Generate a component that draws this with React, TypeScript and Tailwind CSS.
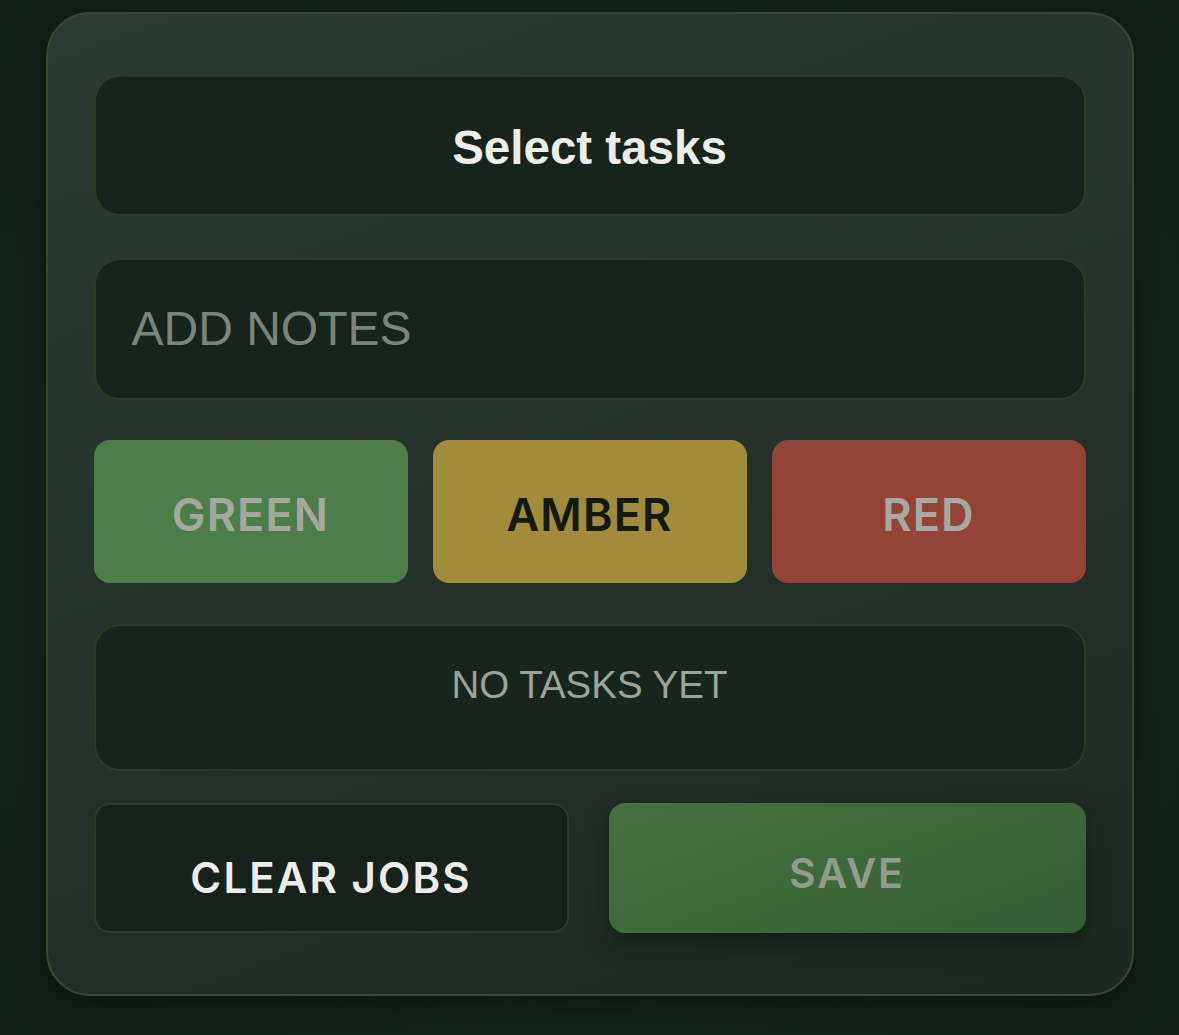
import React from "react";

const inter = "font-['Inter','Noto_Sans',sans-serif]";
const arial = "font-['Liberation_Sans',Arial,sans-serif]";

export default function App() {
  return (
    <div className="min-h-[1035px] w-full bg-[radial-gradient(ellipse_at_center,#1c2d21_0%,#16261b_60%,#122017_100%)] pt-[12px] pb-[39px]">
      {/* Card */}
      <div className="mx-auto flex h-[984px] w-[1088px] flex-col rounded-[44px] border-2 border-[#3c482d] bg-[linear-gradient(160deg,#2b3a32_0%,#24322a_50%,#1d2a21_100%)] px-[46px] pt-[61px] shadow-[0_10px_40px_rgba(0,0,0,0.45)]">
        {/* Title */}
        <div className="flex h-[141px] items-center justify-center rounded-[26px] border-2 border-[#2e3b24] bg-[#17241b] pt-[4px]">
          <span className={`${arial} text-[47.5px] font-bold text-[#eceeea]`}>Select tasks</span>
        </div>

        {/* Notes */}
        <div className="mt-[42px] flex h-[142px] items-center rounded-[26px] border-2 border-[#2e3b24] bg-[#17241b] px-[36px]">
          <span className={`${arial} text-[48px] text-[#79847b]`}>ADD NOTES</span>
        </div>

        {/* Status buttons */}
        <div className="mt-[40px] grid h-[143px] grid-cols-3 gap-[25px]">
          <button className={`${inter} flex items-center justify-center rounded-[16px] bg-[#4d7d48] pt-[6px] text-[45px] font-semibold tracking-[0.025em] text-[#a3a9a1]`}>
            GREEN
          </button>
          <button className={`${inter} flex items-center justify-center rounded-[16px] bg-[#a08c3b] pt-[6px] text-[45px] font-semibold tracking-[0.025em] text-[#141a12]`}>
            AMBER
          </button>
          <button className={`${inter} flex items-center justify-center rounded-[16px] bg-[#944437] pt-[6px] text-[45px] font-semibold tracking-[0.025em] text-[#a6aaa5]`}>
            RED
          </button>
        </div>

        {/* Task list */}
        <div className="mt-[41px] flex h-[147px] justify-center rounded-[26px] border-2 border-[#2e3b24] bg-[#18251c] pt-[37px]">
          <span className={`${arial} text-[38.5px] leading-[44px] text-[#9ba498]`}>NO TASKS YET</span>
        </div>

        {/* Actions */}
        <div className="mt-[32px] flex h-[130px] gap-[40px]">
          <button className={`${inter} flex w-[475px] items-center justify-center rounded-[16px] border-2 border-[#2e3b24] bg-[#16221a] pt-[18px] text-[42px] font-semibold tracking-[0.05em] text-[#ececec]`}>
            CLEAR JOBS
          </button>
          <button className={`${inter} flex flex-1 items-center justify-center rounded-[16px] bg-[linear-gradient(160deg,#45723f_0%,#3d683b_50%,#365d37_100%)] pt-[12px] text-[41px] font-semibold tracking-[0.05em] text-[#919c8f] shadow-[0_10px_24px_rgba(0,0,0,0.35)]`}>
            SAVE
          </button>
        </div>
      </div>
    </div>
  );
}
